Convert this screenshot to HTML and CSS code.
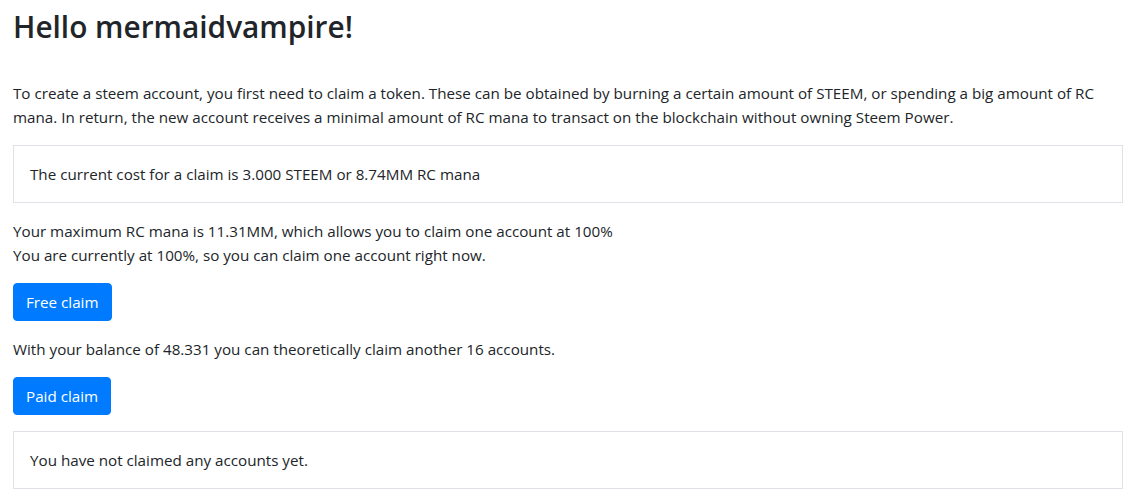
FILE: index.html
```html
<!DOCTYPE html>
<html lang="en">
<head>
<meta charset="utf-8">
<title>Claim accounts</title>
<link rel="stylesheet" href="styles.css">
</head>
<body>
<div class="container">
  <h1 class="title">Hello mermaidvampire!</h1>
  <p class="text">To create a steem account, you first need to claim a token. These can be obtained by burning a certain amount of STEEM, or spending a big amount of RC mana. In return, the new account receives a minimal amount of RC mana to transact on the blockchain without owning Steem Power.</p>
  <div class="box">The current cost for a claim is 3.000 STEEM or 8.74MM RC mana</div>
  <p class="text">Your maximum RC mana is 11.31MM, which allows you to claim one account at 100%<br>You are currently at 100%, so you can claim one account right now.</p>
  <button class="btn" type="button">Free claim</button>
  <p class="text">With your balance of 48.331 you can theoretically claim another 16 accounts.</p>
  <button class="btn" type="button">Paid claim</button>
  <div class="box">You have not claimed any accounts yet.</div>
</div>
</body>
</html>
```
FILE: styles.css
```css
* { box-sizing: border-box; }
html, body { margin: 0; padding: 0; background: #fff; }
body {
  font-family: "Open Sans", "Liberation Sans", sans-serif;
  font-size: 15.2px;
  line-height: 24px;
  color: #212529;
}
.container {
  padding: 0 13px;
  display: flex;
  flex-direction: column;
  align-items: flex-start;
}
.title {
  margin: 8px 0 35px;
  font-size: 29.8px;
  font-weight: 600;
  line-height: 38px;
}
.text {
  margin: 0 0 16px;
}
.box {
  align-self: stretch;
  border: 1px solid #dee2e6;
  padding: 16px;
  margin-bottom: 16px;
}
.btn {
  font-family: inherit;
  font-size: 15.2px;
  line-height: 24px;
  color: #fff;
  background: #007bff;
  border: 1px solid #007bff;
  border-radius: 4px;
  padding: 6px 12px;
  margin-bottom: 16px;
  cursor: pointer;
}
```
